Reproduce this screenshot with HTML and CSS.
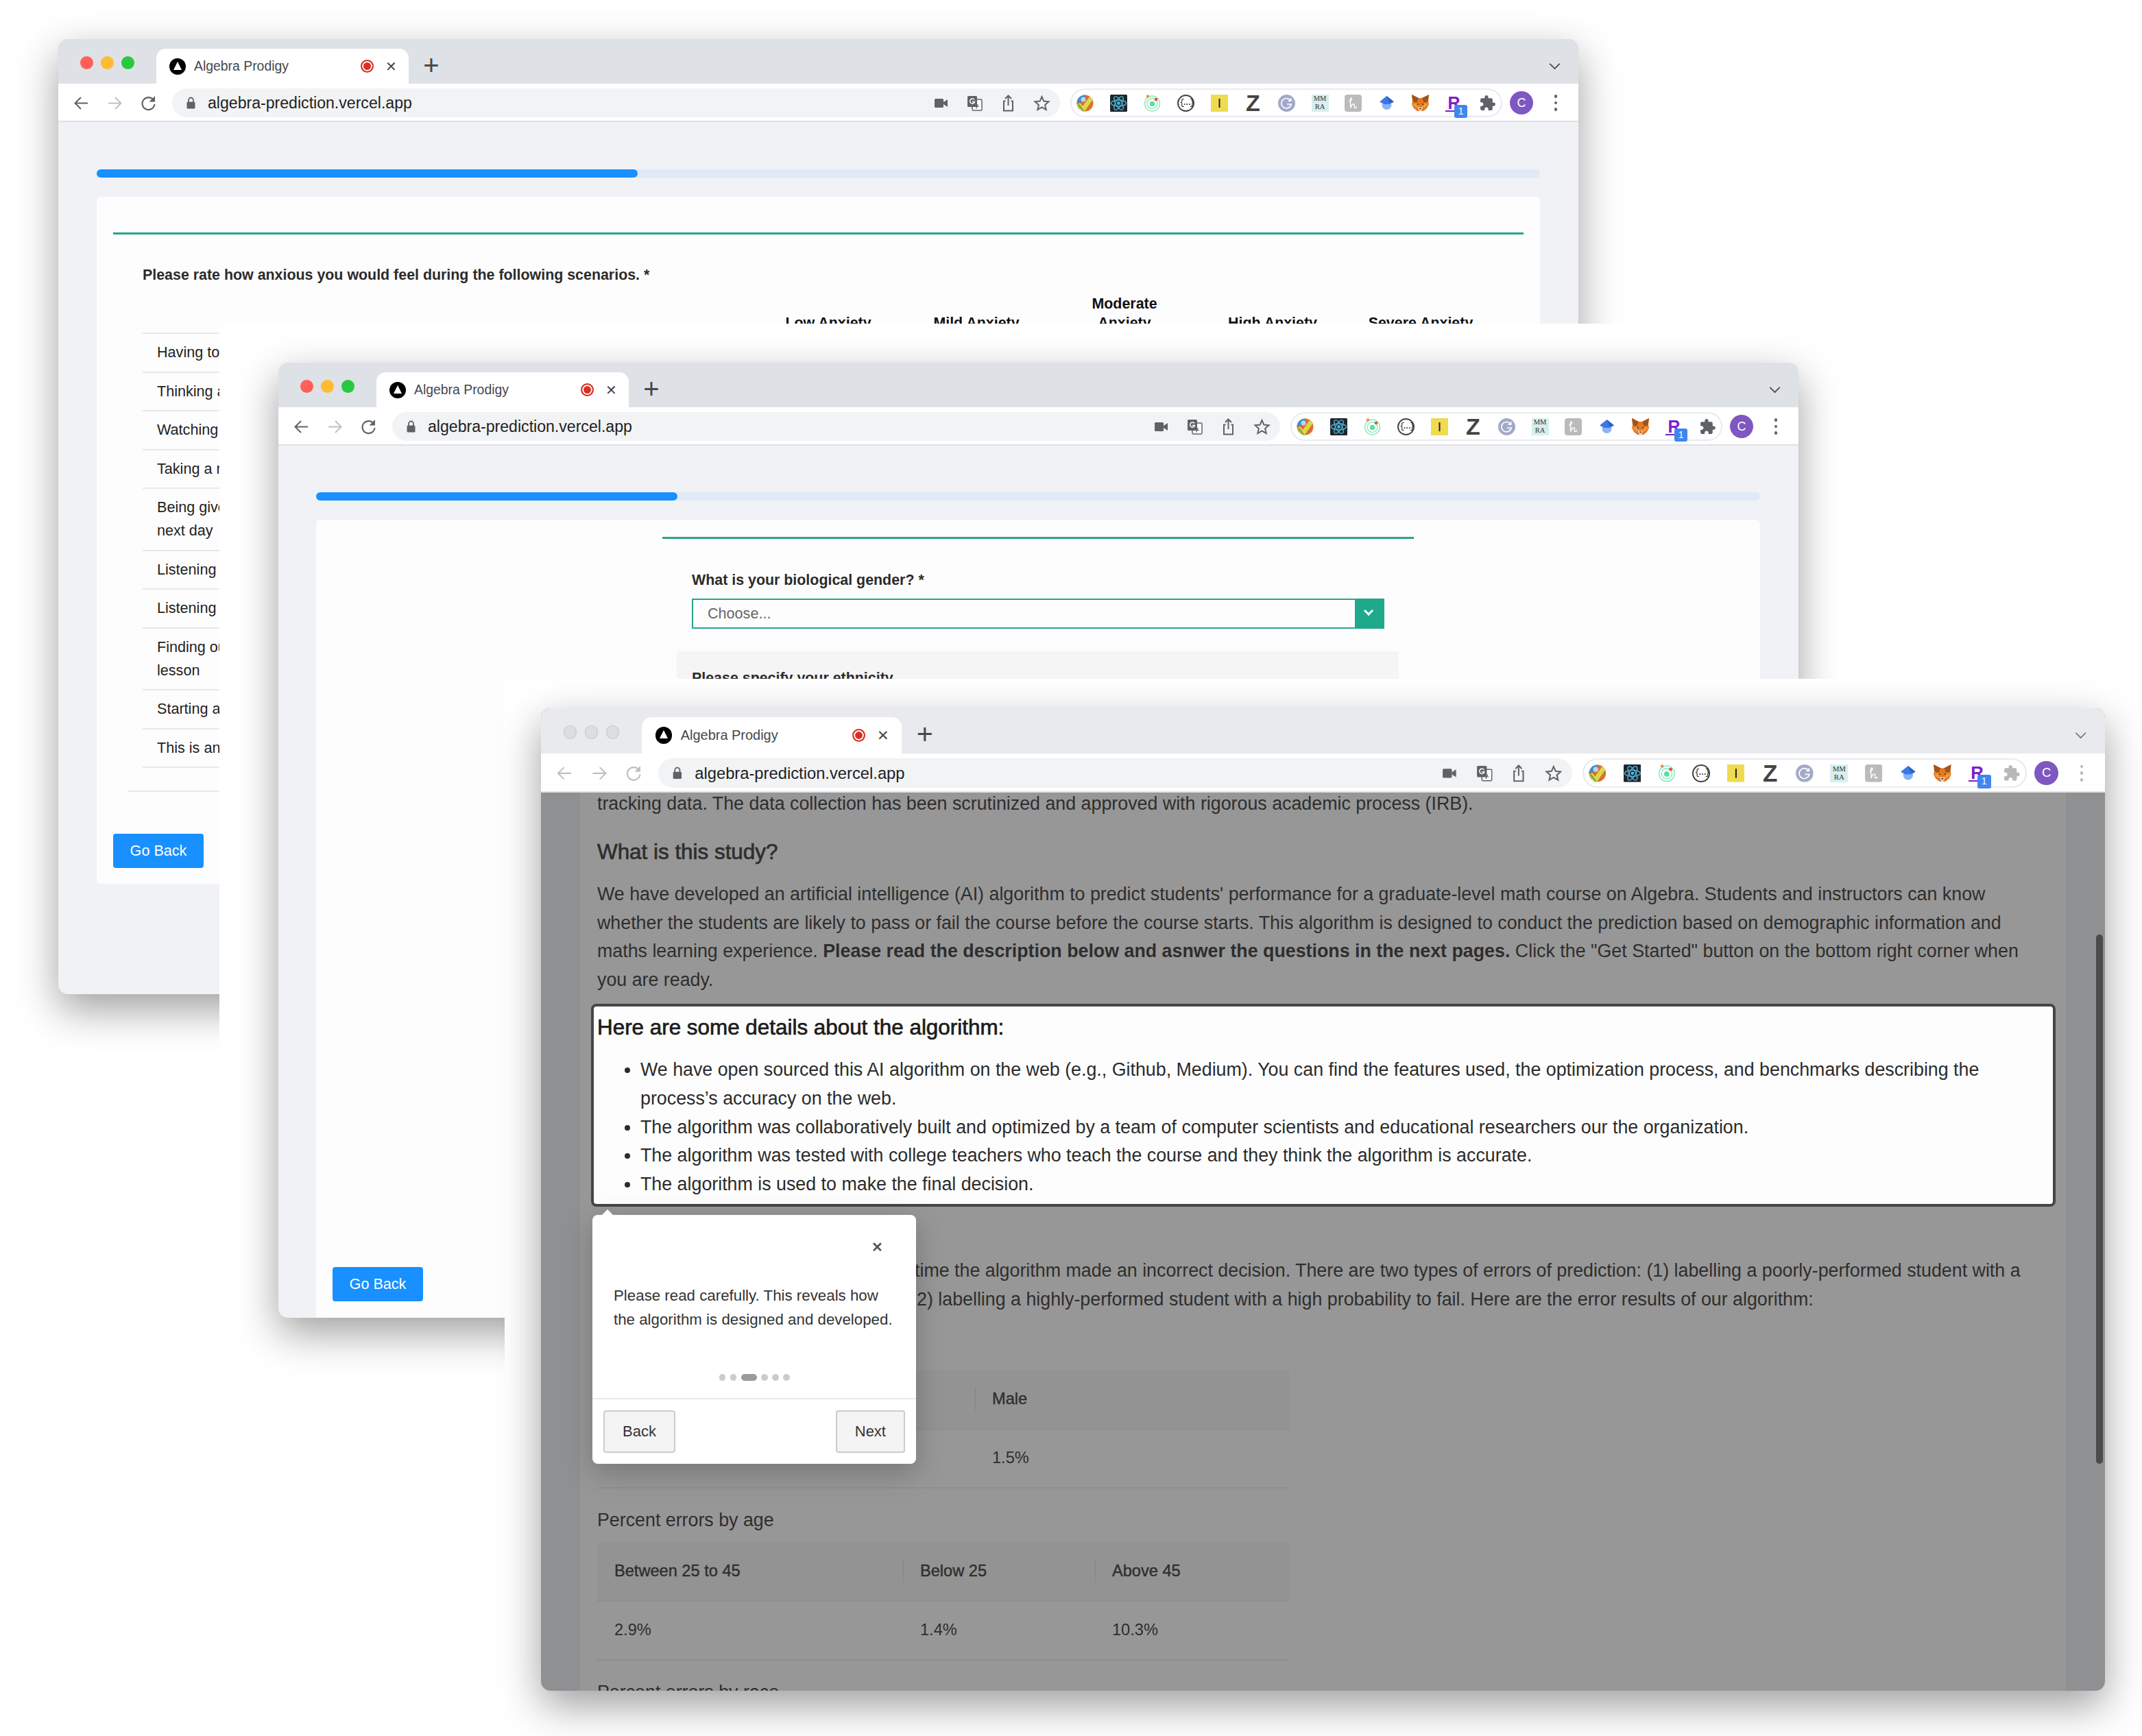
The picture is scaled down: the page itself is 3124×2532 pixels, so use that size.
FILE: index.html
```html
<!DOCTYPE html>
<html lang="en">
<head>
    <meta charset="UTF-8">
    <title>Algebra Prodigy</title>
    <link rel="stylesheet" href="styles.css">
</head>
<body>
    <!-- icons used by the three browser toolbars -->
    <svg class="sprite" aria-hidden="true">
        <symbol id="i-back" viewBox="0 0 25 25"><path d="M22 12.500H4M12 4l-8.500 8.500 8.500 8.500" fill="none" stroke="currentColor" stroke-width="2"/></symbol>
        <symbol id="i-forward" viewBox="0 0 25 25"><path d="M3 12.500h18M13 4l8.500 8.500L13 21" fill="none" stroke="currentColor" stroke-width="2"/></symbol>
        <symbol id="i-reload" viewBox="0 0 25 25"><path d="M20 8a9 9 0 1 0 1.500 6" fill="none" stroke="currentColor" stroke-width="2.200"/><path d="M22 2v8.500h-8.500z" fill="currentColor"/></symbol>
        <symbol id="i-lock" viewBox="0 0 25 25"><path d="M9 11V8a3.500 3.500 0 0 1 7 0v3" fill="none" stroke="currentColor" stroke-width="1.800"/><rect x="6.500" y="10.500" width="12" height="10" rx="1.500" fill="currentColor"/></symbol>
        <symbol id="i-camera" viewBox="0 0 25 25"><rect x="3" y="6" width="13" height="13" rx="1.500" fill="currentColor"/><path d="M16 11l6-4v11l-6-4z" fill="currentColor"/></symbol>
        <symbol id="i-translate" viewBox="0 0 25 25"><rect x="9" y="7" width="14" height="16" rx="1.500" fill="#fff" stroke="currentColor" stroke-width="1.500"/><path d="M14 17.500h5M17.500 14l-3 6.500" fill="none" stroke="currentColor" stroke-width="1.200"/><rect x="2" y="2" width="14" height="16" rx="1.500" fill="currentColor"/><path d="M12 7.500a3.500 3.500 0 1 0 .5 3H9" fill="none" stroke="#fff" stroke-width="1.500"/></symbol>
        <symbol id="i-share" viewBox="0 0 25 25"><path d="M8.500 9.500H6v14h13v-14h-2.500M12.500 16V2M8 6l4.500-4.500L17 6" fill="none" stroke="currentColor" stroke-width="2"/></symbol>
        <symbol id="i-star" viewBox="0 0 25 25"><path d="M12.500 3l2.900 6.600 7.100.7-5.400 4.700 1.600 7-6.200-3.700L6.300 22l1.600-7-5.400-4.700 7.100-.7z" fill="none" stroke="currentColor" stroke-width="2"/></symbol>
        <symbol id="i-puzzle" viewBox="0 0 24 24"><path d="M20.500 11H19V7c0-1.100-.9-2-2-2h-4V3.500C13 2.120 11.880 1 10.500 1S8 2.120 8 3.500V5H4c-1.100 0-1.990.9-1.990 2v3.800H3.500c1.490 0 2.700 1.210 2.700 2.700s-1.210 2.700-2.700 2.700H2V20c0 1.100.9 2 2 2h3.800v-1.500c0-1.490 1.210-2.700 2.700-2.700 1.490 0 2.700 1.210 2.700 2.700V22H17c1.100 0 2-.9 2-2v-4h1.500c1.380 0 2.500-1.120 2.500-2.500S21.880 11 20.500 11z" fill="currentColor"/></symbol>
        <symbol id="i-check" viewBox="0 0 25 25"><circle cx="12.500" cy="12.500" r="12" fill="#d9712e"/><path d="M12.500.5A12 12 0 0 0 .5 12.500L14 8z" fill="#3d8fd0"/><path d="M7 24l-6-9 4-3 4 5L19 3l5 4-12 17z" fill="#dcd84a"/><circle cx="10" cy="7" r="3.500" fill="#bcd4ee"/><path d="M2 15l7 9 3 1-8-11z" fill="#5aa845"/></symbol>
        <symbol id="i-react" viewBox="0 0 25 25"><rect width="25" height="25" rx="1.500" fill="#20262b"/><g fill="none" stroke="#4fb5dc" stroke-width="1.300"><ellipse cx="12.500" cy="12.500" rx="11" ry="4.500"/><ellipse cx="12.500" cy="12.500" rx="11" ry="4.500" transform="rotate(60 12.500 12.500)"/><ellipse cx="12.500" cy="12.500" rx="11" ry="4.500" transform="rotate(120 12.500 12.500)"/></g><circle cx="12.500" cy="12.500" r="2.400" fill="#4fb5dc"/></symbol>
        <symbol id="i-orbit" viewBox="0 0 25 25"><circle cx="12.500" cy="13" r="11" fill="none" stroke="#8fe8c0" stroke-width="1.400"/><circle cx="12.500" cy="13" r="7.500" fill="none" stroke="#8fe8c0" stroke-width="1.400"/><circle cx="12.500" cy="13.500" r="3.800" fill="#5ee09a"/><circle cx="6" cy="2.500" r="2.200" fill="#ef8a4a"/><circle cx="18" cy="7" r="2.300" fill="#e5502f"/></symbol>
        <symbol id="i-yellow" viewBox="0 0 25 25"><rect width="25" height="25" fill="#efdb4f"/><rect x="11.500" y="6" width="2" height="13" fill="#222"/></symbol>
        <symbol id="i-grammar" viewBox="0 0 25 25"><circle cx="12.500" cy="12.500" r="12.500" fill="#a3a9c8"/><path d="M18 8.500a7.200 7.200 0 1 0 1.200 5.500H13" fill="none" stroke="#fff" stroke-width="1.600"/><path d="M19.500 4.500V10h-5.500z" fill="#fff"/></symbol>
        <symbol id="i-honey" viewBox="0 0 25 25"><rect width="25" height="25" rx="4" fill="#bbb"/><path d="M6.500 10C9 10 11 7.500 10.500 5.500 9.800 3.800 8 5.500 8.300 9.500c.3 4 .7 8 .7 10 .8-3.500 2.800-6 4.500-5.800 2 .3-.5 5.300 1.500 5.800 1 .2 2-.5 3-2" fill="none" stroke="#fff" stroke-width="1.400"/></symbol>
        <symbol id="i-cap" viewBox="0 0 25 25"><circle cx="12.500" cy="15" r="7" fill="#8ab4f8"/><path d="M12.500 2L23 10.500l-7 3.500H9l-7-3.500z" fill="#3b78e7"/><path d="M12.500 2L23 10.500 17 13z" fill="#2a62c4"/></symbol>
        <symbol id="i-fox" viewBox="0 0 25 25"><path d="M0 0l10 5h5l10-5-1 10 1 4-3 6-5 4h-9l-5-4-3-6 1-4z" fill="#e8761f"/><path d="M0 0l10 5-3 7-5.500-2zM25 0l-10 5 3 7 5.500-2z" fill="#9c5620"/><path d="M1 14l6-2 3 3-3 5zM24 14l-6-2-3 3 3 5z" fill="#f19a3e"/><path d="M8.500 18h8l-2.500 6h-3z" fill="#e6d3c0"/><path d="M10.500 19.500h4l-2 2z" fill="#222"/><circle cx="8.500" cy="14" r="1" fill="#222"/><circle cx="16.500" cy="14" r="1" fill="#222"/></symbol>
    </svg>

    <section class="shot shot-one">
        <div class="window window-one">
            <div class="tabstrip">
                <div class="lights"><i class="light red"></i><i class="light amber"></i><i class="light green"></i></div>
                <div class="tab">
                    <span class="favicon"></span>
                    <span class="tab-title">Algebra Prodigy</span>
                    <span class="record"></span>
                    <span class="tab-close">&#10005;</span>
                </div>
                <span class="newtab">+</span>
                <span class="chevron"></span>
            </div>
            <div class="toolbar">
                <svg class="nav"><use href="#i-back"/></svg>
                <svg class="nav nav-off"><use href="#i-forward"/></svg>
                <svg class="nav"><use href="#i-reload"/></svg>
                <div class="omnibox">
                    <svg class="lock"><use href="#i-lock"/></svg>
                    <span class="url">algebra-prediction.vercel.app</span>
                    <svg class="omni-icon"><use href="#i-camera"/></svg>
                    <svg class="omni-icon"><use href="#i-translate"/></svg>
                    <svg class="omni-icon"><use href="#i-share"/></svg>
                    <svg class="omni-icon"><use href="#i-star"/></svg>
                </div>
                <div class="extensions">
                    <svg class="ext"><use href="#i-check"/></svg>
                    <svg class="ext"><use href="#i-react"/></svg>
                    <svg class="ext"><use href="#i-orbit"/></svg>
                    <span class="ext ext-json">{...}</span>
                    <svg class="ext"><use href="#i-yellow"/></svg>
                    <span class="ext ext-z">Z</span>
                    <svg class="ext"><use href="#i-grammar"/></svg>
                    <span class="ext ext-mm">MM<br>RA</span>
                    <svg class="ext"><use href="#i-honey"/></svg>
                    <svg class="ext"><use href="#i-cap"/></svg>
                    <svg class="ext"><use href="#i-fox"/></svg>
                    <span class="ext ext-r">R<span class="ext-badge">1</span></span>
                    <svg class="ext ext-puzzle"><use href="#i-puzzle"/></svg>
                </div>
                <span class="avatar">C</span>
                <span class="kebab"><i></i><i></i><i></i></span>
            </div>
            <div class="page page-one">
                <div class="progress"><div class="progress-fill" style="width: 37.5%"></div></div>
                <div class="card">
                    <div class="accent"></div>
                    <div class="survey">
                        <p class="question">Please rate how anxious you would feel during the following scenarios. *</p>
                        <table class="scale">
                            <thead>
                                <tr>
                                    <th></th>
                                    <th>Low Anxiety</th>
                                    <th>Mild Anxiety</th>
                                    <th>Moderate<br>Anxiety</th>
                                    <th>High Anxiety</th>
                                    <th>Severe Anxiety</th>
                                </tr>
                            </thead>
                            <tbody>
                                <tr><td colspan="6">Having to use the tables in the back of a math book</td></tr>
                                <tr><td colspan="6">Thinking about an upcoming math test one day before</td></tr>
                                <tr><td colspan="6">Watching a teacher work an algebraic equation on the blackboard</td></tr>
                                <tr><td colspan="6">Taking a math examination in a course</td></tr>
                                <tr><td colspan="6">Being given a homework assignment of many difficult problems that is due the<br>next day</td></tr>
                                <tr><td colspan="6">Listening to a lecture in math class</td></tr>
                                <tr><td colspan="6">Listening to another student explain a math formula</td></tr>
                                <tr><td colspan="6">Finding out that you did not understand a math<br>lesson</td></tr>
                                <tr><td colspan="6">Starting a new chapter in a math book</td></tr>
                                <tr><td colspan="6">This is an attention check question</td></tr>
                            </tbody>
                        </table>
                    </div>
                    <div class="survey-end"></div>
                    <button class="go-back">Go Back</button>
                </div>
            </div>
        </div>
    </section>

    <section class="shot shot-two">
        <div class="window window-two">
            <div class="tabstrip">
                <div class="lights"><i class="light red"></i><i class="light amber"></i><i class="light green"></i></div>
                <div class="tab">
                    <span class="favicon"></span>
                    <span class="tab-title">Algebra Prodigy</span>
                    <span class="record"></span>
                    <span class="tab-close">&#10005;</span>
                </div>
                <span class="newtab">+</span>
                <span class="chevron"></span>
            </div>
            <div class="toolbar">
                <svg class="nav"><use href="#i-back"/></svg>
                <svg class="nav nav-off"><use href="#i-forward"/></svg>
                <svg class="nav"><use href="#i-reload"/></svg>
                <div class="omnibox">
                    <svg class="lock"><use href="#i-lock"/></svg>
                    <span class="url">algebra-prediction.vercel.app</span>
                    <svg class="omni-icon"><use href="#i-camera"/></svg>
                    <svg class="omni-icon"><use href="#i-translate"/></svg>
                    <svg class="omni-icon"><use href="#i-share"/></svg>
                    <svg class="omni-icon"><use href="#i-star"/></svg>
                </div>
                <div class="extensions">
                    <svg class="ext"><use href="#i-check"/></svg>
                    <svg class="ext"><use href="#i-react"/></svg>
                    <svg class="ext"><use href="#i-orbit"/></svg>
                    <span class="ext ext-json">{...}</span>
                    <svg class="ext"><use href="#i-yellow"/></svg>
                    <span class="ext ext-z">Z</span>
                    <svg class="ext"><use href="#i-grammar"/></svg>
                    <span class="ext ext-mm">MM<br>RA</span>
                    <svg class="ext"><use href="#i-honey"/></svg>
                    <svg class="ext"><use href="#i-cap"/></svg>
                    <svg class="ext"><use href="#i-fox"/></svg>
                    <span class="ext ext-r">R<span class="ext-badge">1</span></span>
                    <svg class="ext ext-puzzle"><use href="#i-puzzle"/></svg>
                </div>
                <span class="avatar">C</span>
                <span class="kebab"><i></i><i></i><i></i></span>
            </div>
            <div class="page page-two">
                <div class="progress"><div class="progress-fill" style="width: 25%"></div></div>
                <div class="card">
                    <div class="form">
                        <div class="accent"></div>
                        <div class="field">
                            <label class="question">What is your biological gender? *</label>
                            <div class="select"><span>Choose...</span><span class="select-arrow"></span></div>
                        </div>
                        <div class="field field-shaded">
                            <label class="question">Please specify your ethnicity</label>
                        </div>
                    </div>
                    <button class="go-back">Go Back</button>
                </div>
            </div>
        </div>
    </section>

    <section class="shot shot-three">
        <div class="window window-three">
            <div class="tabstrip">
                <div class="lights"><i class="light"></i><i class="light"></i><i class="light"></i></div>
                <div class="tab">
                    <span class="favicon"></span>
                    <span class="tab-title">Algebra Prodigy</span>
                    <span class="record"></span>
                    <span class="tab-close">&#10005;</span>
                </div>
                <span class="newtab">+</span>
                <span class="chevron"></span>
            </div>
            <div class="toolbar">
                <svg class="nav nav-off"><use href="#i-back"/></svg>
                <svg class="nav nav-off"><use href="#i-forward"/></svg>
                <svg class="nav nav-off"><use href="#i-reload"/></svg>
                <div class="omnibox">
                    <svg class="lock"><use href="#i-lock"/></svg>
                    <span class="url">algebra-prediction.vercel.app</span>
                    <svg class="omni-icon"><use href="#i-camera"/></svg>
                    <svg class="omni-icon"><use href="#i-translate"/></svg>
                    <svg class="omni-icon"><use href="#i-share"/></svg>
                    <svg class="omni-icon"><use href="#i-star"/></svg>
                </div>
                <div class="extensions">
                    <svg class="ext"><use href="#i-check"/></svg>
                    <svg class="ext"><use href="#i-react"/></svg>
                    <svg class="ext"><use href="#i-orbit"/></svg>
                    <span class="ext ext-json">{...}</span>
                    <svg class="ext"><use href="#i-yellow"/></svg>
                    <span class="ext ext-z">Z</span>
                    <svg class="ext"><use href="#i-grammar"/></svg>
                    <span class="ext ext-mm">MM<br>RA</span>
                    <svg class="ext"><use href="#i-honey"/></svg>
                    <svg class="ext"><use href="#i-cap"/></svg>
                    <svg class="ext"><use href="#i-fox"/></svg>
                    <span class="ext ext-r">R<span class="ext-badge">1</span></span>
                    <svg class="ext ext-puzzle"><use href="#i-puzzle"/></svg>
                </div>
                <span class="avatar">C</span>
                <span class="kebab"><i></i><i></i><i></i></span>
            </div>
            <div class="page page-three">
                <article class="doc">
                    <p>tracking data. The data collection has been scrutinized and approved with rigorous academic process (IRB).</p>
                    <h3>What is this study?</h3>
                    <p>We have developed an artificial intelligence (AI) algorithm to predict students' performance for a graduate-level math course on Algebra. Students and instructors can know whether the students are likely to pass or fail the course before the course starts. This algorithm is designed to conduct the prediction based on demographic information and maths learning experience. <strong>Please read the description below and asnwer the questions in the next pages.</strong> Click the "Get Started" button on the bottom right corner when you are ready.</p>
                    <div class="highlight">
                        <h4>Here are some details about the algorithm:</h4>
                        <ul>
                            <li>We have open sourced this AI algorithm on the web (e.g., Github, Medium). You can find the features used, the optimization process, and benchmarks describing the process&rsquo;s accuracy on the web.</li>
                            <li>The algorithm was collaboratively built and optimized by a team of computer scientists and educational researchers our the organization.</li>
                            <li>The algorithm was tested with college teachers who teach the course and they think the algorithm is accurate.</li>
                            <li>The algorithm is used to make the final decision.</li>
                        </ul>
                    </div>
                    <p class="errors-intro"><span class="lead lead-first">The error rate is the percent of all the</span>time the algorithm made an incorrect decision. There are two types of errors of prediction: (1) labelling a poorly-performed student with a<br><span class="lead lead-second">high probability to pass; and (</span>2) labelling a highly-performed student with a high probability to fail. Here are the error results of our algorithm:</p>
                    <p class="table-title">Percent errors by gender</p>
                    <table class="errors errors-gender">
                        <tr><th>Female</th><th>Male</th></tr>
                        <tr><td>1.3%</td><td>1.5%</td></tr>
                    </table>
                    <p class="table-title">Percent errors by age</p>
                    <table class="errors errors-age">
                        <tr><th>Between 25 to 45</th><th>Below 25</th><th>Above 45</th></tr>
                        <tr><td>2.9%</td><td>1.4%</td><td>10.3%</td></tr>
                    </table>
                    <p class="table-title">Percent errors by race</p>
                </article>
            </div>
            <div class="scrollbar"></div>

            <div class="tour">
                <span class="tour-close">&#10005;</span>
                <p class="tour-text">Please read carefully. This reveals how the algorithm is designed and developed.</p>
                <div class="tour-dots"><i></i><i></i><i class="current"></i><i></i><i></i><i></i></div>
                <div class="tour-footer">
                    <button class="tour-btn">Back</button>
                    <button class="tour-btn">Next</button>
                </div>
            </div>
        </div>
    </section>
</body>
</html>
```

FILE: styles.css
```css
html, body {
    margin: 0;
    padding: 0;
}
body {
    position: relative;
    width: 3124px;
    height: 2532px;
    overflow: hidden;
    background: #fff;
    font-family: "Liberation Sans", Arial, sans-serif;
    color: #2b2b2b;
}
.sprite {
    position: absolute;
    width: 0;
    height: 0;
}

/* each screenshot is a white sheet lying on top of the one before it */
.shot {
    position: absolute;
    background: #fff;
    box-sizing: border-box;
}
.shot-one {
    left: 0;
    top: 0;
    width: 2400px;
    height: 1600px;
    padding: 57px 0 0 85px;
}
.shot-two {
    left: 320px;
    top: 472px;
    width: 2804px;
    height: 1560px;
    padding: 57px 0 0 86px;
}
.shot-three {
    left: 736px;
    top: 990px;
    width: 2388px;
    height: 1542px;
    padding: 43px 0 0 53px;
}
.window {
    position: relative;
    display: flex;
    flex-direction: column;
    box-sizing: border-box;
    width: 2217px;
    height: 1393px;
    border-radius: 14px;
    overflow: hidden;
    background: #f0f2f5;
    box-shadow: 0 22px 60px rgba(0, 0, 0, 0.38);
}
.window-three {
    width: 2281px;
    height: 1433px;
    background: #8f9092;
}

/* browser chrome */
.tabstrip {
    display: flex;
    align-items: flex-end;
    flex: none;
    height: 65px;
    background: #dee1e6;
    color: #3c4043;
}
.lights {
    display: flex;
    align-items: center;
    gap: 11px;
    align-self: flex-start;
    width: 143px;
    height: 68px;
    padding-left: 32px;
    box-sizing: border-box;
}
.light {
    width: 19px;
    height: 19px;
    border-radius: 50%;
    background: #dcdee0;
    box-shadow: inset 0 0 0 1px #c8cacc;
}
.light.red { background: #ff5f57; box-shadow: none; }
.light.amber { background: #febc2e; box-shadow: none; }
.light.green { background: #28c840; box-shadow: none; }
.tab {
    display: flex;
    align-items: center;
    box-sizing: border-box;
    width: 368px;
    height: 51px;
    padding: 0 17px 0 19px;
    border-radius: 14px 14px 0 0;
    background: #fff;
}
.favicon {
    position: relative;
    flex: none;
    width: 24px;
    height: 24px;
    border-radius: 50%;
    background: #000;
}
.favicon::after {
    content: "";
    position: absolute;
    left: 6px;
    top: 5px;
    border-left: 6px solid transparent;
    border-right: 6px solid transparent;
    border-bottom: 12px solid #fff;
}
.tab-title {
    flex: 1;
    margin-left: 12px;
    font-size: 19.400px;
    color: #45484c;
}
.record {
    flex: none;
    box-sizing: border-box;
    width: 19px;
    height: 19px;
    border-radius: 50%;
    background: #d93025;
    border: 2px solid #d93025;
    box-shadow: inset 0 0 0 2px #fff;
}
.tab-close {
    width: 18px;
    margin-left: 16px;
    font-size: 20px;
    text-align: center;
    color: #45484c;
}
.newtab {
    width: 66px;
    height: 51px;
    font-size: 40px;
    font-weight: 300;
    line-height: 49px;
    text-align: center;
    color: #45484c;
}
.chevron {
    width: 11px;
    height: 11px;
    margin: 0 28px 22px auto;
    border-right: 2.500px solid #45484c;
    border-bottom: 2.500px solid #45484c;
    transform: rotate(45deg) scale(0.85);
}
.toolbar {
    display: flex;
    align-items: center;
    flex: none;
    box-sizing: border-box;
    height: 56px;
    padding: 2px 21px 0 9px;
    background: #fff;
    border-bottom: 2px solid #dfe1e3;
    color: #5f6368;
}
.nav {
    width: 49px;
    height: 25px;
    flex: none;
}
.nav-off {
    color: #bdc1c6;
}
.omnibox {
    display: flex;
    align-items: center;
    flex: 1;
    height: 42px;
    margin-left: 10px;
    padding: 0 14px 0 15px;
    gap: 24px;
    border-radius: 21px;
    background: #f1f3f4;
}
.lock {
    width: 25px;
    height: 25px;
    flex: none;
    margin-right: -12px;
}
.url {
    flex: 1;
    font-size: 23.100px;
    color: #202124;
}
.omni-icon {
    width: 25px;
    height: 25px;
    flex: none;
}
.extensions {
    display: flex;
    align-items: center;
    gap: 23.900px;
    box-sizing: border-box;
    height: 42px;
    margin-left: 15px;
    padding: 0 7px;
    border: 2px solid #e8eaed;
    border-radius: 21px;
}
.ext {
    position: relative;
    display: block;
    width: 25px;
    height: 25px;
    flex: none;
    text-align: center;
}
.ext-json {
    box-sizing: border-box;
    border: 2px solid #444;
    border-radius: 50%;
    background: #fff;
    font-family: "Liberation Mono", monospace;
    font-size: 12px;
    line-height: 20px;
    letter-spacing: -3.500px;
    white-space: nowrap;
    color: #222;
}
.ext-z {
    font-size: 34px;
    font-weight: bold;
    line-height: 25px;
    color: #444;
}
.ext-mm {
    font-family: "Liberation Serif", serif;
    font-size: 10.500px;
    line-height: 12px;
    background: #d6efee;
    color: #333;
}
.ext-r {
    font-size: 25px;
    font-weight: bold;
    line-height: 25px;
    color: #7b20c8;
    border-bottom: 2px solid #7b20c8;
    box-sizing: content-box;
    height: 23px;
}
.ext-badge {
    position: absolute;
    left: 13px;
    top: 15px;
    width: 19px;
    height: 19px;
    border-radius: 3px;
    background: #3f86f0;
    color: #fff;
    font-size: 14px;
    font-weight: normal;
    line-height: 19px;
}
.ext-puzzle {
    color: #5f6368;
}
.avatar {
    flex: none;
    width: 34px;
    height: 34px;
    margin-left: 11px;
    border-radius: 50%;
    background: #7e57c2;
    color: #fff;
    font-size: 18px;
    line-height: 34px;
    text-align: center;
}
.kebab {
    display: flex;
    flex-direction: column;
    align-items: center;
    gap: 5px;
    flex: none;
    width: 24px;
    margin-left: 21px;
}
.kebab i {
    width: 4.500px;
    height: 4.500px;
    border-radius: 50%;
    background: #5f6368;
}

/* the page in the first two windows */
.page {
    display: flex;
    flex-direction: column;
    flex: 1;
    min-height: 0;
}
.page-one {
    padding: 69px 56px 161px 56px;
}
.page-two {
    padding: 68px 56px 0 55px;
}
.progress {
    flex: none;
    height: 12px;
    border-radius: 6px;
    background: #dfeaf6;
}
.progress-fill {
    height: 100%;
    border-radius: 6px;
    background: #1890ff;
}
.card {
    display: flex;
    flex-direction: column;
    flex: 1;
    margin-top: 28px;
    padding: 0 24px;
    border-radius: 6px 6px 0 0;
    background: #fdfdfd;
}
.page-one .card {
    border-radius: 6px;
}
.accent {
    height: 3px;
    margin-top: 52px;
    background: #27a58b;
}
.question {
    display: block;
    margin: 0;
    font-size: 21.400px;
    font-weight: bold;
    line-height: 34px;
    color: #2b2b2b;
}
.survey {
    padding: 42px 42px 0 43px;
}
.scale {
    width: 100%;
    margin-top: 11px;
    border-collapse: collapse;
    table-layout: fixed;
    font-size: 21.400px;
}
.scale th {
    width: 216px;
    padding: 0;
    line-height: 28px;
    text-align: center;
    vertical-align: bottom;
    color: #111;
}
.scale th:first-child {
    width: auto;
}
.scale td {
    padding: 10px 21px 10.500px;
    border-top: 2px solid #e8e8e8;
    border-bottom: 2px solid #e8e8e8;
    line-height: 34px;
    font-size: 21.600px;
    color: #1f1f1f;
}
.survey-end {
    height: 2px;
    margin: 33px 0 0 21px;
    background: #e8e8e8;
}
.go-back {
    align-self: flex-start;
    width: 132px;
    height: 50px;
    margin-top: 61px;
    padding: 0;
    border: none;
    border-radius: 4px;
    background: #1890ff;
    color: #fff;
    font-family: inherit;
    font-size: 21.600px;
}
.form {
    width: 1096px;
    margin: 0 auto;
}
.page-two .accent {
    margin-top: 25px;
}
.field {
    padding: 0 43px;
}
.field .question {
    margin-top: 43px;
}
.select {
    display: flex;
    align-items: center;
    justify-content: space-between;
    box-sizing: border-box;
    height: 44px;
    margin: 10px 0 33px;
    padding-left: 21px;
    border: 2px solid #27a58b;
    font-size: 21.600px;
    color: #666;
}
.select-arrow {
    position: relative;
    width: 41px;
    height: 40px;
    background: #1fa98c;
}
.select-arrow::after {
    content: "";
    position: absolute;
    left: 15px;
    top: 11px;
    width: 7px;
    height: 7px;
    border-right: 3px solid #fff;
    border-bottom: 3px solid #fff;
    transform: rotate(45deg);
}
.field-shaded {
    height: 120px;
    margin: 0 22px 0 21px;
    padding: 1px 22px;
    background: #f5f5f5;
}
.field-shaded .question {
    margin-top: 21px;
}
.page-two .go-back {
    margin: auto 0 24px 0;
}

/* third window, the page is dimmed behind the guided tour */
.window-three .tabstrip {
    zoom: 1.029;
    height: 64px;
    background: #e8eaed;
}
.window-three .toolbar {
    zoom: 1.029;
}
.window-three .chevron {
    border-color: #777;
    border-width: 2px;
}
.window-three .ext-puzzle {
    color: #b8b8b8;
}
.window-three .kebab i {
    background: #b8b8b8;
}
.page-three {
    margin: 0 57px;
    overflow: hidden;
    background: #979797;
}
.doc {
    margin-top: -4px;
    padding: 0 23px 0 25px;
    font-size: 26.800px;
    line-height: 41.600px;
    color: #2e2e2e;
}
.doc p {
    margin: 0;
}
.doc h3 {
    margin: 28px 0 20px;
    font-size: 31.400px;
    font-weight: normal;
    line-height: 42px;
    -webkit-text-stroke: 0.7px #2e2e2e;
}
.highlight {
    margin: 14px -8px 0 -9px;
    padding: 10px 5px 8px;
    border: 4px solid #454545;
    border-radius: 8px;
    background: #fdfdfd;
    color: #2b2b2b;
}
.highlight h4 {
    margin: 0 0 20px;
    font-size: 31.400px;
    font-weight: normal;
    line-height: 42px;
    color: #1c1c1c;
    -webkit-text-stroke: 0.7px #1c1c1c;
}
.highlight ul {
    margin: 0;
    padding-left: 63px;
}
.doc .errors-intro {
    margin-top: 73px;
}
.lead {
    display: inline-block;
    white-space: nowrap;
}
.lead-first {
    width: 463px;
}
.lead-second {
    width: 466px;
}
.doc .table-title {
    margin-top: 28px;
    line-height: 42px;
}
.doc .errors + .table-title {
    margin-top: 25px;
}
.errors {
    width: 1009px;
    margin-top: 12px;
    border-collapse: collapse;
    table-layout: fixed;
    font-size: 23.600px;
}
.errors th {
    position: relative;
    height: 84px;
    padding: 0 0 0 25px;
    background: #939393;
    font-weight: normal;
    text-align: left;
    -webkit-text-stroke: 0.4px #2e2e2e;
    border-bottom: 2px solid #8f8f8f;
}
.errors td {
    height: 84px;
    padding: 0 0 0 25px;
    border-bottom: 2px solid #8f8f8f;
}
.errors th + th::before {
    content: "";
    position: absolute;
    left: 0;
    top: 24px;
    width: 1px;
    height: 34px;
    background: #858585;
}
.errors-gender th:first-child { width: 526px; }
.errors-age th:first-child { width: 421px; }
.errors-age th:nth-child(2) { width: 255px; }
.scrollbar {
    position: absolute;
    right: 3px;
    top: 330px;
    width: 10px;
    height: 772px;
    border-radius: 5px;
    background: #4a4b4d;
}

/* guided tour popover */
.tour {
    position: absolute;
    left: 75px;
    top: 739px;
    display: flex;
    flex-direction: column;
    box-sizing: border-box;
    width: 472px;
    height: 363px;
    border-radius: 8px;
    background: #fff;
    box-shadow: 0 12px 40px rgba(0, 0, 0, 0.22);
}
.tour::before {
    content: "";
    position: absolute;
    left: 14px;
    top: -8px;
    border-left: 8px solid transparent;
    border-right: 8px solid transparent;
    border-bottom: 8px solid #fff;
}
.tour-close {
    position: absolute;
    left: 405px;
    top: 34px;
    width: 20px;
    font-size: 20px;
    font-weight: bold;
    line-height: 26px;
    text-align: center;
    color: #555;
}
.tour-text {
    margin: 100px 0 0;
    padding: 0 31px;
    font-size: 22.300px;
    line-height: 35px;
    color: #333;
}
.tour-dots {
    display: flex;
    justify-content: center;
    gap: 6.500px;
    margin-top: 62px;
}
.tour-dots i {
    width: 9.500px;
    height: 9.500px;
    border-radius: 5px;
    background: #ccc;
}
.tour-dots i.current {
    width: 23px;
    background: #9b9b9b;
}
.tour-footer {
    display: flex;
    justify-content: space-between;
    margin-top: auto;
    padding: 16px 16px 16px;
    border-top: 2px solid #e8e8e8;
}
.tour-btn {
    height: 62px;
    padding: 0 26px;
    border: 2px solid #ccc;
    border-radius: 4px;
    background: #f4f4f4;
    color: #333;
    font-family: inherit;
    font-size: 22px;
}
```
